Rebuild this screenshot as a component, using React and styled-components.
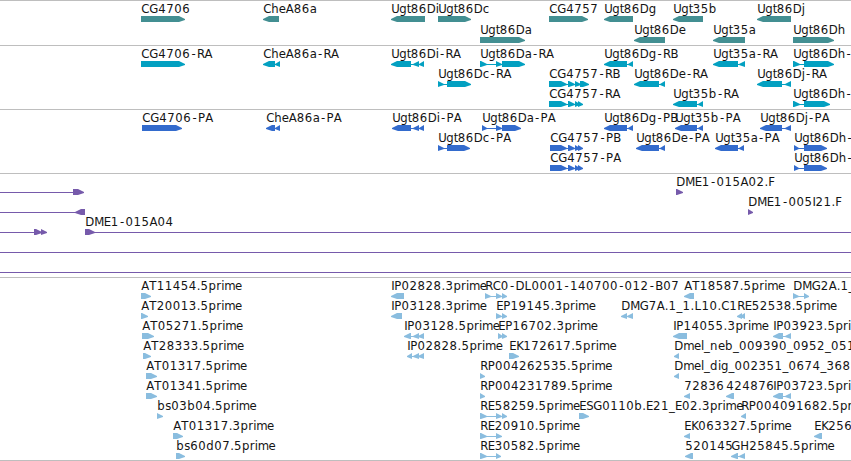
import React from "react";
import styled, { createGlobalStyle } from "styled-components";

const GlobalStyle = createGlobalStyle`
  body { margin: 0; background: #fff; overflow: hidden; }
`;

const Browser = styled.main`
  display: flex;
  flex-direction: column;
  width: 851px;
  height: 461px;
  overflow: hidden;
  background: #fff;
`;

const Track = styled.section`
  box-sizing: border-box;
  flex: none;
  display: flex;
  flex-direction: column;
  height: ${(p) => p.$height}px;
  border-top: 1px solid #bebebe;
  color: ${(p) => p.$color};
`;

const EndRule = styled.footer`
  flex: none;
  height: 1px;
  background: #bebebe;
`;

const Lane = styled.svg`
  display: block;
  flex: none;
  width: 851px;
  height: ${(p) => p.$height}px;
  overflow: visible;
  fill: currentColor;
`;

const Label = styled.text`
  font-family: "DejaVu Sans", sans-serif;
  font-size: 11.7px;
  fill: #141414;
  white-space: pre;
`;

const ADVANCE = {
  A: 8, B: 8, C: 8, D: 9, E: 7, F: 7, G: 9, H: 9, I: 3, K: 7, L: 7, M: 9.5, P: 7.3,
  R: 7.5, S: 7, T: 7.5, U: 8, a: 7, b: 8, c: 6.5, d: 8, e: 7, g: 7.5, h: 7.5, i: 3, j: 3,
  l: 3, m: 10.8, n: 8, p: 7.6, r: 5, s: 6, t: 4, "-": 6.6, ".": 3.8, _: 6,
};

function glyphPositions(text, start) {
  let x = start + 0.3;
  return [...text].map((ch) => {
    const at = ch === "-" ? x + 1.2 : x;
    x += ADVANCE[ch] ?? 8;
    return at.toFixed(1);
  }).join(" ");
}

function exonPoints(from, to, dir) {
  const head = Math.min(6, to - from);
  return dir > 0
    ? `${from},15 ${to - head},15 ${to},18 ${to},19 ${to - head},21 ${from},21`
    : `${to},15 ${from + head},15 ${from},18 ${from},19 ${from + head},21 ${to},21`;
}

function Feature({ name, dir, blocks, line }) {
  const start = blocks.length ? blocks[0][0] : 0;
  const [a, b] = line ?? [start, blocks[blocks.length - 1][1]];
  return (
    <g>
      <rect x={a} y={18} width={b - a} height={1} shapeRendering="crispEdges" />
      {blocks.map(([from, to]) => (
        <polygon key={from} points={exonPoints(from, to, dir)} />
      ))}
      {name && <Label x={glyphPositions(name, start)} y={12}>{name}</Label>}
    </g>
  );
}

const f = (name, dir, ...blocks) => ({ name, dir, blocks });
const span = (dir, line, ...blocks) => ({ dir, line, blocks });

const TRACKS = [
  {
    id: "genes", color: "#438f92", height: 45, pitch: 21,
    lanes: [
      [
        f("CG4706", 1, [141, 185]), f("CheA86a", -1, [263, 279]),
        f("Ugt86Di", -1, [391, 425]), f("Ugt86Dc", 1, [438, 471]),
        f("CG4757", 1, [549, 588]), f("Ugt86Dg", -1, [604, 633]),
        f("Ugt35b", -1, [673, 703]), f("Ugt86Dj", -1, [757, 791]),
      ],
      [
        f("Ugt86Da", 1, [480, 525]), f("Ugt86De", -1, [634, 665]),
        f("Ugt35a", -1, [713, 745]), f("Ugt86Dh", 1, [793, 834]),
      ],
    ],
  },
  {
    id: "transcripts", color: "#03a0c1", height: 64, pitch: 20,
    lanes: [
      [
        f("CG4706-RA", 1, [141, 185]), f("CheA86a-RA", -1, [263, 275], [275, 280]),
        f("Ugt86Di-RA", -1, [391, 411], [413, 419], [419, 424]),
        f("Ugt86Da-RA", 1, [480, 487], [496, 502], [502, 525]),
        f("Ugt86Dg-RB", -1, [604, 627], [628, 633]),
        f("Ugt35a-RA", -1, [713, 738], [739, 745]),
        f("Ugt86Dh-", 1, [793, 800], [804, 834]),
      ],
      [
        f("Ugt86Dc-RA", 1, [438, 444], [447, 471]),
        f("CG4757-RB", 1, [549, 567], [568, 575], [575, 581], [580, 589]),
        f("Ugt86De-RA", -1, [634, 659], [660, 665]),
        f("Ugt86Dj-RA", -1, [757, 782], [785, 791]),
      ],
      [
        f("CG4757-RA", 1, [549, 567], [568, 575], [575, 580], [578, 583]),
        f("Ugt35b-RA", -1, [673, 697], [698, 703]),
        f("Ugt86Dh-", 1, [793, 800], [804, 830]),
      ],
    ],
  },
  {
    id: "proteins", color: "#336bcd", height: 64, pitch: 20,
    lanes: [
      [
        f("CG4706-PA", 1, [142, 182]), f("CheA86a-PA", -1, [266, 275], [275, 280]),
        f("Ugt86Di-PA", -1, [392, 411], [413, 419], [419, 424]),
        f("Ugt86Da-PA", 1, [482, 487], [496, 502], [502, 521]),
        f("Ugt86Dg-PB", -1, [604, 627], [628, 633]),
        f("Ugt35b-PA", -1, [675, 697], [698, 703]),
        f("Ugt86Dj-PA", -1, [760, 782], [785, 791]),
      ],
      [
        f("Ugt86Dc-PA", 1, [438, 444], [447, 470]),
        f("CG4757-PB", 1, [550, 567], [568, 575], [575, 580], [578, 583]),
        f("Ugt86De-PA", -1, [636, 659], [660, 665]),
        f("Ugt35a-PA", -1, [715, 738], [739, 744]),
        f("Ugt86Dh-", 1, [794, 799], [804, 827]),
      ],
      [
        f("CG4757-PA", 1, [550, 567], [568, 575], [575, 580], [578, 583]),
        f("Ugt86Dh-", 1, [794, 799], [804, 827]),
      ],
    ],
  },
  {
    id: "bac-ends", color: "#765aab", height: 104, pitch: 20,
    lanes: [
      [span(1, [0, 74], [73, 84]), f("DME1-015A02.F", 1, [676, 683])],
      [span(-1, [0, 76], [75, 85]), f("DME1-005I21.F", 1, [748, 753])],
      [
        span(1, [0, 45], [34, 42], [41, 47]),
        { name: "DME1-015A04", dir: 1, line: [85, 851], blocks: [[85, 95]] },
      ],
      [span(1, [0, 851])],
      [span(1, [0, 851])],
    ],
  },
  {
    id: "ests", color: "#8abddf", height: 183, pitch: 20,
    lanes: [
      [
        f("AT11454.5prime", 1, [141, 151]), f("IP02828.3prime", -1, [391, 404]),
        f("RC0-DL0001-140700-012-B07", 1, [485, 491], [496, 502], [502, 507]),
        f("AT18587.5prime", -1, [684, 694]), f("DMG2A.1_", 1, [793, 799], [804, 809]),
      ],
      [
        f("AT20013.5prime", 1, [141, 148]), f("IP03128.3prime", -1, [391, 402]),
        f("EP19145.3prime", 1, [496, 502], [502, 507]),
        f("DMG7A.1_1.L10.C1", -1, [621, 627], [627, 633]),
        f("RE52538.5prime", -1, [737, 742], [740, 745]),
      ],
      [
        f("AT05271.5prime", 1, [142, 154]),
        f("IP03128.5prime", -1, [404, 411], [413, 419], [418, 424]),
        f("EP16702.3prime", 1, [498, 503], [502, 507]),
        f("IP14055.3prime", -1, [673, 687]), f("IP03923.5pri", -1, [773, 783], [785, 791]),
      ],
      [
        f("AT28333.5prime", 1, [143, 151]),
        f("IP02828.5prime", -1, [407, 412], [413, 419], [418, 424]),
        f("EK172617.5prime", 1, [509, 519]), f("Dmel_neb_009390_0952_051", -1, [674, 679]),
      ],
      [
        f("AT01317.5prime", 1, [146, 157]), f("RP004262535.5prime", 1, [480, 485]),
        f("Dmel_dig_002351_0674_368", -1, [674, 679]),
      ],
      [
        f("AT01341.5prime", 1, [146, 157]), f("RP004231789.5prime", 1, [480, 485]),
        f("72836", -1, [684, 690]), f("424876", -1, [726, 734]),
        f("IP03723.5pri", -1, [773, 783], [785, 791]),
      ],
      [
        f("bs03b04.5prime", 1, [157, 163]),
        f("RE58259.5prime", 1, [480, 487], [496, 502], [502, 507]),
        f("ESG0110b.E21_E02.3prime", 1, [579, 589]), f("RP004091682.5pr", -1, [741, 746]),
      ],
      [
        f("AT01317.3prime", 1, [173, 183]), f("RE20910.5prime", 1, [480, 487], [496, 502]),
        f("EK063327.5prime", -1, [684, 690]), f("EK256", -1, [814, 822]),
      ],
      [
        f("bs60d07.5prime", 1, [176, 185]), f("RE30582.5prime", 1, [480, 487], [496, 501]),
        f("520145", -1, [685, 693]), f("GH25845.5prime", -1, [731, 738], [739, 745]),
      ],
    ],
  },
];

export default function App() {
  return (
    <>
      <GlobalStyle />
      <Browser>
        {TRACKS.map((track) => (
          <Track key={track.id} $height={track.height} $color={track.color}>
            {track.lanes.map((lane, i) => (
              <Lane key={i} $height={track.pitch}>
                {lane.map((feature, n) => <Feature key={n} {...feature} />)}
              </Lane>
            ))}
          </Track>
        ))}
        <EndRule />
      </Browser>
    </>
  );
}
